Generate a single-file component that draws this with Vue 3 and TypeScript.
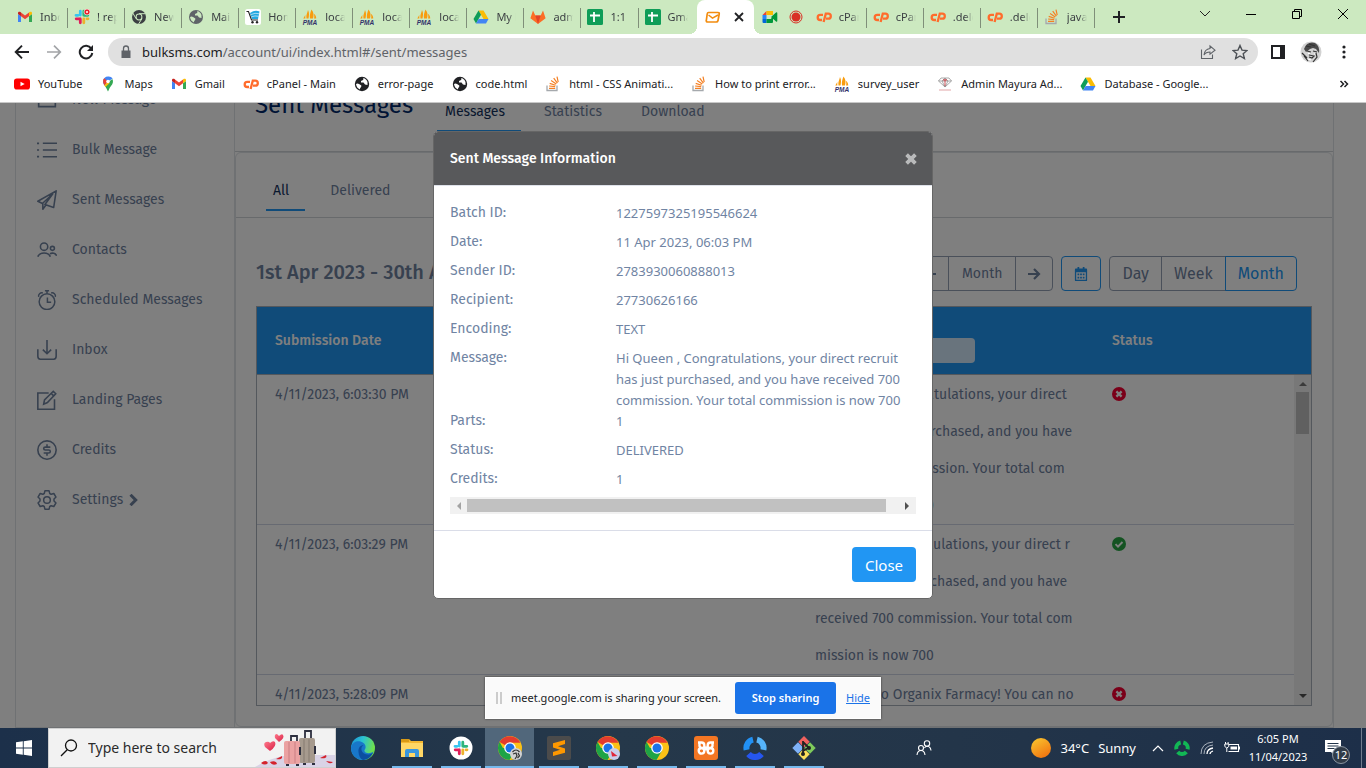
<script setup lang="ts">
import { ref } from 'vue'

interface Tab { icon: string; label: string }

const tabs: Tab[] = [
  { icon: 'gmail', label: 'Inbox' },
  { icon: 'slack-alert', label: '! reports' },
  { icon: 'chrome-dark', label: 'New Tab' },
  { icon: 'globe-gray', label: 'Mail' },
  { icon: 'cart', label: 'Home' },
  { icon: 'pma', label: 'localhost' },
  { icon: 'pma', label: 'localhost' },
  { icon: 'pma', label: 'localhost' },
  { icon: 'drive', label: 'My Drive' },
  { icon: 'gitlab', label: 'admin' },
  { icon: 'sheets', label: '1:1' },
  { icon: 'sheets', label: 'Gmail' },
  { icon: 'mail', label: '' },
  { icon: 'meet', label: '' },
  { icon: 'cpanel', label: 'cPanel' },
  { icon: 'cpanel', label: 'cPanel' },
  { icon: 'cpanel', label: '.delete' },
  { icon: 'cpanel', label: '.delete' },
  { icon: 'stack', label: 'javascript' },
]

const bookmarks: Tab[] = [
  { icon: 'youtube', label: 'YouTube' },
  { icon: 'maps', label: 'Maps' },
  { icon: 'gmail', label: 'Gmail' },
  { icon: 'cpanel', label: 'cPanel - Main' },
  { icon: 'globe', label: 'error-page' },
  { icon: 'globe', label: 'code.html' },
  { icon: 'stack', label: 'html - CSS Animati...' },
  { icon: 'stack', label: 'How to print error...' },
  { icon: 'pma', label: 'survey_user' },
  { icon: 'gem', label: 'Admin Mayura Ad...' },
  { icon: 'drive', label: 'Database - Google...' },
]

const menu: Tab[] = [
  { icon: 'compose', label: 'New Message' },
  { icon: 'list', label: 'Bulk Message' },
  { icon: 'plane', label: 'Sent Messages' },
  { icon: 'people', label: 'Contacts' },
  { icon: 'clock', label: 'Scheduled Messages' },
  { icon: 'inbox', label: 'Inbox' },
  { icon: 'edit', label: 'Landing Pages' },
  { icon: 'coin', label: 'Credits' },
  { icon: 'gear', label: 'Settings' },
]

const rows = [
  {
    date: '4/11/2023, 6:03:30 PM',
    ok: false,
    lines: ['Hi Lindani , Congratulations, your direct', 'recruit has just purchased, and you have', 'received 70 commission. Your total com', 'mission is now 700'],
  },
  {
    date: '4/11/2023, 6:03:29 PM',
    ok: true,
    lines: ['Hi Queen , Congratulations, your direct r', 'ecruit has just purchased, and you have', 'received 700 commission. Your total com', 'mission is now 700'],
  },
  {
    date: '4/11/2023, 5:28:09 PM',
    ok: false,
    lines: ['Welcome to Organix Farmacy! You can no'],
  },
]

const details = [
  { name: 'Batch ID:', value: '1227597325195546624' },
  { name: 'Date:', value: '11 Apr 2023, 06:03 PM' },
  { name: 'Sender ID:', value: '2783930060888013' },
  { name: 'Recipient:', value: '27730626166' },
  { name: 'Encoding:', value: 'TEXT' },
  { name: 'Message:', value: 'Hi Queen , Congratulations, your direct recruit\nhas just purchased, and you have received 700\ncommission. Your total commission is now 700' },
  { name: 'Parts:', value: '1' },
  { name: 'Status:', value: 'DELIVERED' },
  { name: 'Credits:', value: '1' },
]

const apps = [
  { icon: 'edge', name: 'Edge', open: false },
  { icon: 'folder', name: 'File Explorer', open: true },
  { icon: 'slack-round', name: 'Slack', open: true },
  { icon: 'chrome-photo', name: 'Chrome', open: true, active: true },
  { icon: 'sublime', name: 'Sublime Text', open: true },
  { icon: 'chrome-badge', name: 'Chrome', open: true },
  { icon: 'chrome', name: 'Chrome', open: true },
  { icon: 'xampp', name: 'XAMPP', open: true },
  { icon: 'ring-blue', name: 'Tracker', open: true },
  { icon: 'git', name: 'Git', open: true },
]

const open = ref(true)
const sharing = ref(true)
const filter = ref('')
</script>

<template>
  <svg class="defs" aria-hidden="true">
    <defs>
      <linearGradient id="g-edge" x1="0" y1="0" x2="1" y2="0.3">
        <stop offset="0" stop-color="#1b8fd8" /><stop offset="0.5" stop-color="#2bc3d2" /><stop offset="1" stop-color="#6fe04c" />
      </linearGradient>
      <linearGradient id="g-sun" x1="0.2" y1="0" x2="0.8" y2="1">
        <stop offset="0" stop-color="#f9c32e" /><stop offset="1" stop-color="#f0700f" />
      </linearGradient>
      <linearGradient id="g-heart" x1="0" y1="0" x2="1" y2="1">
        <stop offset="0" stop-color="#ff7a8c" /><stop offset="1" stop-color="#d81f45" />
      </linearGradient>
      <symbol id="gmail" viewBox="0 0 16 16">
        <path d="M1 13V5l3 2.2V13z" fill="#4285f4" /><path d="M12 13V7.2L15 5v8z" fill="#34a853" />
        <path d="M1 5V4c0-1.4 1.6-1.7 2.5-1L4 3.400V7.2z" fill="#c5221f" />
        <path d="M4 3.400 8 6.400l4-3V7.200l-4 3-4-3z" fill="#ea4335" />
        <path d="M12 3.400l.5-.4c.9-.7 2.500-.4 2.500 1v1l-3 2.200z" fill="#fbbc04" />
      </symbol>
      <symbol id="slack" viewBox="0 0 16 16">
        <g fill="none" stroke-width="2.800" stroke-linecap="round">
          <path d="M6.300 2.200V6M2 6.300h2" stroke="#36c5f0" /><path d="M13.800 6.300H10M9.800 2.200v4" stroke="#2eb67d" />
          <path d="M9.800 13.800V10M14 9.800h-1" stroke="#ecb22e" /><path d="M2.200 9.800H6M6.300 10v3.800" stroke="#e01e5a" />
        </g>
      </symbol>
      <symbol id="slack-alert" viewBox="0 0 16 16">
        <use href="#slack" width="16" height="16" />
        <circle cx="13" cy="3" r="3" fill="#e8212c" stroke="#fff" stroke-width=".6" /><circle cx="13" cy="3" r="1" fill="#fff" />
      </symbol>
      <symbol id="slack-round" viewBox="0 0 24 24">
        <circle cx="12" cy="12" r="11.500" fill="#fff" /><use href="#slack" x="4" y="4" width="16" height="16" />
      </symbol>
      <symbol id="chrome-dark" viewBox="0 0 16 16">
        <circle cx="8" cy="8" r="7" fill="#3c4043" /><path d="M8 4.700h6.500M5.100 9.700 1.800 4M10.900 9.700 7.600 15" stroke="#cce9c0" stroke-width="1" />
        <circle cx="8" cy="8" r="3.400" fill="#cce9c0" /><circle cx="8" cy="8" r="2.400" fill="#3c4043" />
      </symbol>
      <symbol id="globe-gray" viewBox="0 0 16 16">
        <circle cx="8" cy="8" r="7" fill="#5f6368" />
        <path d="M2 8q1.500-.8 3 0l2 1.200q1 .8 0 1.800l-1 1.500v1Q2.500 12 2 8zM9 2q1 1 0 2L7 5v1.500h2.500l1.500 2 2.500.5q.8-3-1-5T9 2z" fill="#cce9c0" />
      </symbol>
      <symbol id="globe" viewBox="0 0 16 16">
        <circle cx="8" cy="8" r="7.200" fill="#202124" />
        <path d="M2 8q1.500-.8 3 0l2 1.200q1 .8 0 1.800l-1 1.500v1Q2.500 12 2 8zM9 2q1 1 0 2L7 5v1.500h2.500l1.500 2 2.500.5q.8-3-1-5T9 2z" fill="#fff" />
      </symbol>
      <symbol id="cart" viewBox="0 0 16 16">
        <rect width="16" height="16" rx="2.500" fill="#fff" /><path d="M5 4q5-3.500 9.500-1.500L13 10H7z" fill="#25a8e0" />
        <path d="M6 5.500q4-2 8-.8M6.500 7.800q3.500-1.500 7-.5" fill="none" stroke="#fff" stroke-width=".6" />
        <path d="M1.500 2.500h2l3 8.500h6.500" fill="none" stroke="#222" stroke-width="1.100" /><circle cx="7.500" cy="13.300" r="1.200" fill="#222" /><circle cx="12" cy="13.300" r="1.200" fill="#222" />
      </symbol>
      <symbol id="pma" viewBox="0 0 16 16">
        <path d="M4.500 9.500C3.800 6 5.500 3.500 6 1c1.600 3 1 6 .5 8.500zM8 9.500C7.400 6 8.500 3 9.500.5c2.500 3 2.300 6 1.500 9zM12 9.500c.6-2 .2-3.500-.2-4.800 1.900 1.300 2.500 3 2.400 4.800zM1.300 9.500l2-3.500v3.500z" fill="#f89c0e" />
        <text x="8" y="15.500" text-anchor="middle" font-family="Liberation Sans" font-size="6.500" font-weight="700" font-style="italic" fill="#33336b">PMA</text>
      </symbol>
      <symbol id="drive" viewBox="0 0 16 16">
        <path d="M5.500 1.500h5L15.500 10h-5z" fill="#fbbc04" /><path d="M5.500 1.500 8 5.800 3 14.500.5 10z" fill="#0f9d58" /><path d="M5.600 10h9.900L13 14.500H3z" fill="#4285f4" />
      </symbol>
      <symbol id="gitlab" viewBox="0 0 16 16">
        <path d="M8 15 .4 9.200 3 1.500l2.300 5h5.400l2.300-5 2.600 7.700z" fill="#fc6d26" /><path d="M8 15 5.300 6.500h5.400z" fill="#e24329" />
      </symbol>
      <symbol id="sheets" viewBox="0 0 16 16">
        <rect width="16" height="16" rx="1.500" fill="#0f9d58" /><path d="M3 6.500h10M7 3v10" stroke="#fff" stroke-width="1.800" />
      </symbol>
      <symbol id="mail" viewBox="0 0 16 16">
        <path d="M3.500 3.500H13q1.500 0 1.200 1.500L13 11.500q-.3 1.500-1.700 1.500H2.700Q1 13 1.300 11.500L2.200 5q.2-1.500 1.300-1.500z" fill="none" stroke="#f28c0f" stroke-width="1.700" /><path d="m3.500 6 4 3.200L13 6" fill="none" stroke="#f28c0f" stroke-width="1.500" />
      </symbol>
      <symbol id="meet" viewBox="0 0 16 16">
        <path d="M.5 6 4.500 2v4z" fill="#ea4335" /><path d="M4.500 2H11v4H4.500z" fill="#fbbc04" /><path d="M.5 6h4v4h-4z" fill="#2684fc" /><path d="M.5 10h4v4h-3q-1 0-1-1z" fill="#0066da" />
        <path d="M4.500 10H9l2-4v7q0 1-1 1H4.500zM9 8l5-4.500q1.300-.8 1.300.8v7.400q0 1.600-1.300.8z" fill="#00983a" />
      </symbol>
      <symbol id="cpanel" viewBox="0 0 16 16">
        <g fill="none" stroke="#ff6c2c" stroke-width="2.300"><path d="M7 5.800H4.300a2.600 2.600 0 0 0 0 5.200H6" /><path d="M7.600 13 9.800 4.700h2.500a2.500 2.500 0 0 1 0 5H10" /></g>
      </symbol>
      <symbol id="stack" viewBox="0 0 16 16">
        <path d="M2 9.500v5h10v-5" fill="none" stroke="#a5a9ad" stroke-width="1.300" />
        <path d="M4 12.400h6.200M4.100 10l6.100.7M4.700 7.400l5.900 1.800M6.100 4.600l5.200 3.300M8.700 2.200l3.700 4.900M12 .7l1.200 5.500" stroke="#f48024" stroke-width="1.200" />
      </symbol>
      <symbol id="youtube" viewBox="0 0 16 16"><rect y="2.500" width="16" height="11" rx="2.800" fill="#f00" /><path d="m6.500 5.700 4.200 2.300-4.200 2.300z" fill="#fff" /></symbol>
      <symbol id="maps" viewBox="0 0 16 16">
        <path d="M8 .5a5 5 0 0 0-5 5c0 1.500.7 2.700 1.500 3.900L8 5.500l4.700-3A5 5 0 0 0 8 .5z" fill="#4285f4" /><path d="M4.200 2.300 8 5.500 4.500 9.400C3.200 7.500 2.300 4.500 4.200 2.300z" fill="#ea4335" />
        <path d="M4.500 9.400 12.300 3c1.500 2.500.4 5-1.300 7-1.400 1.600-1.800 3.400-3 5.500-1-2-1.500-3.500-3.500-6.100z" fill="#34a853" /><path d="M4.500 9.400 8 5.500l1.700 1.400-4.200 4z" fill="#fbbc04" /><circle cx="8" cy="5.500" r="1.800" fill="#fff" />
      </symbol>
      <symbol id="gem" viewBox="0 0 16 16">
        <path d="M4 2h8l2.500 3L8 11 1.500 5zM1.500 5h13M5 5l3 6 3-6-3-3z" fill="none" stroke="#888" stroke-width=".7" /><path d="M6 4h4M8 3v7" stroke="#c2262e" stroke-width=".8" /><path d="M2 14h12" stroke="#d98f93" stroke-width=".8" />
      </symbol>
      <symbol id="compose" viewBox="0 0 24 24"><path d="M2 4h20v16H2z" fill="none" stroke="currentColor" stroke-width="2" /></symbol>
      <symbol id="list" viewBox="0 0 24 24"><path d="M7 4h17M7 12h17M7 20h17" stroke="currentColor" stroke-width="1.800" /><path d="M0 4h2.500M0 12h2.500M0 20h2.500" stroke="currentColor" stroke-width="2" /></symbol>
      <symbol id="plane" viewBox="0 0 24 24"><path d="M23 1 1 13.500l5.500 2.700L19 4.500 9.500 17.500 20 21zM7 16.500V23l3.500-4.800" fill="none" stroke="currentColor" stroke-width="1.900" stroke-linejoin="round" /></symbol>
      <symbol id="people" viewBox="0 0 24 24"><g fill="none" stroke="currentColor" stroke-width="1.900"><circle cx="8.500" cy="8" r="4.400" /><circle cx="18.500" cy="10" r="2.400" /><path d="M1 20c1.500-3.800 4.500-4.500 7.500-4.500s6 .7 7.500 4.500M15.500 16.500c3-1.500 6.800-.7 8 2.500" /></g></symbol>
      <symbol id="clock" viewBox="0 0 24 24"><g fill="none" stroke="currentColor" stroke-width="1.800"><circle cx="12" cy="14" r="9.400" /><path d="M9.500 1h5M12 1v3M12.500 9v5.700h4.500M2 8.200c-.8-3 2-5.500 5-4.700M22 8.200c.8-3-2-5.500-5-4.700" /></g></symbol>
      <symbol id="inbox" viewBox="0 0 24 24"><path d="M1 11v8.500Q1 23 4 23h16q3 0 3-3.500V11M12 0v16M7 11.500l5 5 5-5" fill="none" stroke="currentColor" stroke-width="1.900" /></symbol>
      <symbol id="edit" viewBox="0 0 24 24"><path d="M14 3.500H1V23h20V11M8 17l1-5L19.500 1.500l3 3L12.500 15zM17 4l3 3" fill="none" stroke="currentColor" stroke-width="1.900" /></symbol>
      <symbol id="coin" viewBox="0 0 24 24"><g fill="none" stroke="currentColor" stroke-width="1.900"><circle cx="12" cy="12" r="11" /><path d="M16 8.500H10q-2 0-2 1.700T10 12h4q2 0 2 1.800t-2 1.800H8M12 5v3.500M12 15.500V19" /></g></symbol>
      <symbol id="gear" viewBox="0 0 24 24"><g fill="none" stroke="currentColor" stroke-width="1.800" stroke-linejoin="round"><circle cx="12" cy="12" r="4" /><path d="M9.500 1h5l.8 3.200 1.700 1 3.200-1 2.600 4.300-2.400 2.300v2.400l2.400 2.300-2.600 4.300-3.200-1-1.700 1-.8 3.200h-5l-.8-3.200-1.700-1-3.200 1-2.600-4.300 2.400-2.300v-2.400L1.200 8.500l2.600-4.300 3.200 1 1.700-1z" /></g></symbol>
      <symbol id="bad" viewBox="0 0 14 14"><circle cx="7" cy="7" r="7" fill="#f50032" /><path d="m4.400 4.400 5.200 5.200M9.600 4.400 4.400 9.600" stroke="#fff" stroke-width="2.300" /></symbol>
      <symbol id="good" viewBox="0 0 14 14"><circle cx="7" cy="7" r="7" fill="#28a745" /><path d="m3.500 7.200 2.500 2.500 4.500-4.700" fill="none" stroke="#fff" stroke-width="1.900" /></symbol>
      <symbol id="edge" viewBox="0 0 24 24">
        <circle cx="12" cy="12" r="12" fill="url(#g-edge)" /><path d="M.1 11C1.500 6 6 4.500 9.500 5.500c4 1 5.500 4 5 6.500-.3 1.500-1.500 2-1 3.300 1 2.500 6 2.500 9 .3C20.500 21 16.500 24 12 24 5 24-.5 18 .1 11z" fill="#1877c9" />
        <path d="M7.500 16c-.5-4.500 2-7 5-6.800-2.800 1.300-3 5.800.5 8.300 3 2 7 1 9-.8-2 4.500-6 7-10 7.200-2.800-1-4.200-4-4.500-7.900z" fill="#0c4fa0" />
      </symbol>
      <symbol id="folder" viewBox="0 0 24 24"><path d="M1 3h8l2 2h12v16H1z" fill="#f5b731" /><path d="M1 7h22v14H1z" fill="#ffd766" /><path d="M1 3h8v3H1z" fill="#d99a16" /><path d="M5 21v-6q0-2 2-2h10q2 0 2 2v6h-4v-4H9v4z" fill="#3a96dd" /></symbol>
      <symbol id="chrome" viewBox="0 0 24 24">
        <circle cx="12" cy="12" r="12" fill="#fbc116" /><path d="M12 12 1.600 6A12 12 0 0 1 22.400 6.600L22.400 6.800H12z" fill="#e33b2e" /><path d="M1.600 6A12 12 0 0 0 11.500 24l5.500-9.500L12 12H5z" fill="#1ea446" />
        <circle cx="12" cy="12" r="5.800" fill="#fff" /><circle cx="12" cy="12" r="4.500" fill="#1a73e8" />
      </symbol>
      <symbol id="chrome-photo" viewBox="0 0 24 24"><use href="#chrome" width="24" height="24" /><circle cx="18" cy="18" r="6" fill="#d2d2d2" /><path d="M14.500 16q3.500-4 7 0M15 18l3-1 1 3-2 3M20 17l1.500 3-2 2" fill="none" stroke="#333" stroke-width="1.200" /></symbol>
      <symbol id="chrome-badge" viewBox="0 0 24 24"><use href="#chrome" width="24" height="24" /><circle cx="18" cy="18" r="6" fill="#c9cfea" /><path d="m15 15 6.500 5-5.500.5z" fill="#e0283a" /></symbol>
      <symbol id="sublime" viewBox="0 0 24 24"><rect width="24" height="24" rx="2" fill="#4b4b4b" /><path d="M18 4v4l-7 2.200 7 2.200v4.400L6 20v-4l7-2.300-7-2.100V7.300z" fill="#ff9800" /></symbol>
      <symbol id="xampp" viewBox="0 0 24 24"><rect width="24" height="24" rx="3" fill="#f37623" /><g fill="none" stroke="#fff" stroke-width="2.400"><path d="M4 6.500h3.500a2.800 2.800 0 0 1 2.800 2.800V12M20 6.500h-3.500a2.800 2.800 0 0 0-2.800 2.800V12M6 12h12M5.500 6.500V10l1 2M18.500 6.500V10l-1 2" /><circle cx="7.500" cy="14.800" r="2.800" /><circle cx="16.500" cy="14.800" r="2.800" /></g><path d="M9.300 10.500h5.400v4H9.300z" fill="#fff" /></symbol>
      <symbol id="ring-blue" viewBox="0 0 24 24"><g fill="none" stroke-width="6"><path d="M10 3.700A8.500 8.500 0 0 0 3.600 13.800" stroke="#2191f5" /><path d="M14 3.700A8.500 8.500 0 0 1 20.400 13.800" stroke="#56b4fa" /><path d="M5.500 18A8.500 8.500 0 0 0 18.500 18" stroke="#2556f0" /></g></symbol>
      <symbol id="git" viewBox="0 0 24 24">
        <path d="m12 0 5.700 5.700-5.700 5.700-5.700-5.700z" fill="#f0615e" /><path d="m6 6.300 5.700 5.700L6 17.700.3 12z" fill="#7fb2f8" /><path d="m18 6.300 5.700 5.700-5.700 5.700-5.700-5.700z" fill="#7ecb5c" /><path d="m12 12.600 5.700 5.700L12 24l-5.700-5.700z" fill="#fbdf5a" />
        <path d="M11 5v13M11 6l6 6M11 15l5-3" stroke="#222" stroke-width="1.800" /><circle cx="11" cy="18" r="2" fill="#222" /><circle cx="17" cy="12" r="2" fill="#222" />
      </symbol>
      <symbol id="ring-green" viewBox="0 0 24 24"><g fill="none" stroke="#12b755" stroke-width="6"><path d="M10 3.700A8.500 8.500 0 0 0 3.600 13.800M14 3.700A8.500 8.500 0 0 1 20.400 13.800M5.500 18A8.500 8.500 0 0 0 18.500 18" /></g></symbol>
    </defs>
  </svg>

  <div class="screen">
    <header class="browser">
      <div class="tabstrip">
        <div class="tabs">
          <a v-for="(t, i) in tabs" :key="i" href="#" class="tab" :class="{ active: t.icon === 'mail', before: i === 11 || t.icon === 'meet' || t.icon === 'mail' }">
            <svg class="i16"><use :href="'#' + t.icon" /></svg>
            <span v-if="t.label" class="tab-label">{{ t.label }}</span>
            <svg v-else-if="t.icon === 'mail'" class="i14" viewBox="0 0 14 14"><path d="m3 3 8 8M11 3l-8 8" stroke="#202124" stroke-width="1.800" /></svg>
            <svg v-else class="i14" viewBox="0 0 14 14"><circle cx="7" cy="7" r="6" fill="none" stroke="#d93025" /><circle cx="7" cy="7" r="4.500" fill="#d93025" /></svg>
          </a>
        </div>
        <div class="window-controls">
          <button aria-label="New tab"><svg class="i14" viewBox="0 0 14 14"><path d="M7 1v12M1 7h12" stroke="#202124" stroke-width="2" /></svg></button>
          <span class="grow"></span>
          <button aria-label="Search tabs" class="wide"><svg class="i12" viewBox="0 0 12 12"><path d="m1 3 5 5 5-5" fill="none" stroke="#222" /></svg></button>
          <button aria-label="Minimize" class="wide"><svg class="i12" viewBox="0 0 12 12"><path d="M1 6.500h10" stroke="#000" /></svg></button>
          <button aria-label="Restore" class="wide"><svg class="i12" viewBox="0 0 12 12"><path d="M1.500 3.500h7v7h-7zM3.500 3.500v-2h7v7h-2" fill="none" stroke="#000" /></svg></button>
          <button aria-label="Close window" class="wide"><svg class="i12" viewBox="0 0 12 12"><path d="m1 1 10 10M11 1 1 11" stroke="#000" /></svg></button>
        </div>
      </div>

      <div class="toolbar">
        <button aria-label="Back"><svg class="i16" viewBox="0 0 16 16"><path d="M15 8H2M8 1.700 1.700 8 8 14.300" fill="none" stroke="#202124" stroke-width="1.900" /></svg></button>
        <button aria-label="Forward"><svg class="i16" viewBox="0 0 16 16"><path d="M1 8h13M8 1.700 14.300 8 8 14.300" fill="none" stroke="#a2a4a7" stroke-width="1.700" /></svg></button>
        <button aria-label="Reload"><svg class="i16" viewBox="0 0 16 16"><path d="M13.300 4.600A6.300 6.300 0 1 0 14.300 9" fill="none" stroke="#202124" stroke-width="2" /><path d="M15 1v6H9z" fill="#202124" /></svg></button>
        <div class="omnibox">
          <svg class="i14" viewBox="0 0 14 14"><path d="M2.500 5.500h9V13h-9z" fill="#5f6368" /><path d="M4.500 6V3.500a2.500 2.500 0 0 1 5 0V6" fill="none" stroke="#5f6368" stroke-width="1.300" /></svg>
          <span class="url">bulksms.com<i>/account/ui/index.html#/sent/messages</i></span>
          <button aria-label="Share"><svg class="i16" viewBox="0 0 16 16"><path d="M1.500 5.500v9h11v-4M10 2l5 4.200-5 4V8c-3 0-4.800 1-6 3 .3-3.500 2.500-6 6-6.500z" fill="none" stroke="#5f6368" stroke-width="1.100" /></svg></button>
          <button aria-label="Bookmark"><svg class="i16" viewBox="0 0 16 16"><path d="m8 1.500 2 4.600 5 .4-3.800 3.200 1.200 4.800L8 12l-4.400 2.500 1.200-4.800L1 6.500l5-.4z" fill="none" stroke="#4d5156" stroke-width="1.400" /></svg></button>
        </div>
        <div class="tools">
          <button aria-label="Side panel"><svg class="i16" viewBox="0 0 16 16"><path d="M1 1h14v14H1zM3 3v10h7V3z" fill="#202124" fill-rule="evenodd" /></svg></button>
          <button aria-label="Profile">
            <svg class="i22" viewBox="0 0 22 22"><circle cx="11" cy="11" r="10.500" fill="#d2d2d2" /><path d="M4 8Q7 0 15 2q5 3 4 10l-3-4-3-1-3 1-4 3z" fill="#4a4a4a" /><path d="m2 12 5 5M6 5l5 1M7 10l4 1M13 10l4 1M9 14l5 1-2 2-3-1M16 12l1 4-4 5M4 15l4 5M9 3l6 2" fill="none" stroke="#333" stroke-width="1.200" /><path d="M8 12.500h2M14 13h1M8 18l3 1" stroke="#fff" stroke-width="1.200" /></svg>
          </button>
          <button aria-label="Menu"><svg class="i16" viewBox="0 0 16 16"><circle cx="8" cy="3" r="1.600" fill="#202124" /><circle cx="8" cy="8" r="1.600" fill="#202124" /><circle cx="8" cy="13" r="1.600" fill="#202124" /></svg></button>
        </div>
      </div>

      <nav class="bookmarks">
        <a v-for="b in bookmarks" :key="b.label" href="#"><svg class="i16"><use :href="'#' + b.icon" /></svg>{{ b.label }}</a>
        <button aria-label="More bookmarks"><svg class="i12" viewBox="0 0 12 12"><path d="m2.500 3 3 3-3 3M6.500 3l3 3-3 3" fill="none" stroke="#202124" stroke-width="1.500" /></svg></button>
      </nav>
    </header>

    <div class="viewport">
      <div class="page">
        <nav class="sidebar">
          <a v-for="m in menu" :key="m.label" href="#">
            <svg class="i20"><use :href="'#' + m.icon" /></svg>{{ m.label }}
            <svg v-if="m.icon === 'gear'" class="i12 caret" viewBox="0 0 12 12"><path d="m2.500.8 5.200 5.200-5.200 5.200" fill="none" stroke="currentColor" stroke-width="3" /></svg>
          </a>
        </nav>
        <main class="main">
          <div class="page-head">
            <h1>Sent Messages</h1>
            <nav class="head-tabs"><a href="#" class="current">Messages</a><a href="#">Statistics</a><a href="#">Download</a></nav>
          </div>
          <section class="card">
            <nav class="filter-tabs"><a href="#" class="current">All</a><a href="#">Delivered</a></nav>
            <div class="range">
              <h2>1st Apr 2023 - 30th Apr 2023</h2>
              <div class="group small">
                <button aria-label="Previous month"><svg class="i14" viewBox="0 0 14 14"><path d="M13 7H2.500M7 2 2 7l5 5" fill="none" stroke="currentColor" stroke-width="2.200" /></svg></button>
                <button class="period">Month</button>
                <button aria-label="Next month"><svg class="i14" viewBox="0 0 14 14"><path d="M1 7h10.500M7 2l5 5-5 5" fill="none" stroke="currentColor" stroke-width="2.200" /></svg></button>
              </div>
              <div class="group">
                <button class="on" aria-label="Pick date"><svg class="i14" viewBox="0 0 14 16"><path d="M0 3q0-1.200 1-1.200h2V0h2v1.800h4V0h2v1.800h2q1 0 1 1.200v12q0 1-1 1H1q-1 0-1-1zM1.500 6v8.500h11V6z" fill="currentColor" fill-rule="evenodd" /><path d="M3 8.500h8M3 12h8" stroke="currentColor" stroke-width="2" stroke-dasharray="2 1" /></svg></button>
              </div>
              <div class="group"><button>Day</button><button>Week</button><button class="on">Month</button></div>
            </div>
            <div class="grid-box">
              <table>
                <thead>
                  <tr>
                    <th class="c-date">Submission Date</th><th class="c-to"></th>
                    <th class="c-msg"><label for="message-filter">Message</label><input id="message-filter" v-model="filter" type="text" /></th>
                    <th>Status</th>
                  </tr>
                </thead>
                <tbody>
                  <tr v-for="r in rows" :key="r.date">
                    <td>{{ r.date }}</td><td></td>
                    <td><span v-for="l in r.lines" :key="l" class="line">{{ l }}</span></td>
                    <td><svg class="i14 state" role="img" :aria-label="r.ok ? 'Delivered' : 'Failed'"><use :href="r.ok ? '#good' : '#bad'" /></svg></td>
                  </tr>
                </tbody>
              </table>
              <div class="vbar">
                <svg class="i12" viewBox="0 0 12 12"><path d="M2 8h8L6 4z" fill="#777" /></svg>
                <div class="thumb"></div>
                <svg class="i12" viewBox="0 0 12 12"><path d="M2 4h8L6 8z" fill="#505050" /></svg>
              </div>
            </div>
          </section>
        </main>
      </div>

      <div v-if="open" class="backdrop">
        <section class="modal" role="dialog" aria-labelledby="modal-title">
          <header>
            <h3 id="modal-title">Sent Message Information</h3>
            <button aria-label="Close dialog" @click="open = false"><svg class="i12" viewBox="0 0 12 12"><path d="m1.600 1.600 8.800 8.800M10.400 1.600l-8.800 8.800" stroke="#b9babb" stroke-width="3.800" /></svg></button>
          </header>
          <div class="modal-body">
            <dl>
              <div v-for="d in details" :key="d.name" :class="{ multi: d.name === 'Message:' }"><dt>{{ d.name }}</dt><dd>{{ d.value }}</dd></div>
            </dl>
            <div class="hbar">
              <svg class="i12" viewBox="0 0 12 12"><path d="M8 2v8L4 6z" fill="#a3a3a3" /></svg>
              <div class="track"><div class="thumb"></div></div>
              <svg class="i12" viewBox="0 0 12 12"><path d="M4 2v8l4-4z" fill="#505050" /></svg>
            </div>
          </div>
          <footer><button @click="open = false">Close</button></footer>
        </section>
      </div>
      <div v-if="sharing" class="share">
        <span class="grip"></span><span>meet.google.com is sharing your screen.</span>
        <button @click="sharing = false">Stop sharing</button><a href="#" @click.prevent="sharing = false">Hide</a>
      </div>
    </div>

    <footer class="taskbar">
      <button class="start" aria-label="Start"><svg class="i16" viewBox="0 0 16 16"><path d="M0 2.300 6.800 1.300V7.600H0zM7.700 1.200 16 0v7.600H7.700zM0 8.500h6.800v6.300L0 13.800zM7.700 8.500H16V16l-8.300-1.200z" fill="#fff" /></svg></button>
      <label class="search">
        <svg class="i18" viewBox="0 0 18 18"><circle cx="11" cy="6.500" r="5.500" fill="none" stroke="#111" stroke-width="1.300" /><path d="M7.200 10.700 1 17" stroke="#111" stroke-width="1.300" /></svg>
        <input type="text" placeholder="Type here to search" />
        <svg class="luggage" viewBox="0 0 80 38">
          <path d="M0 38q20-12 40-12t40 0v12z" fill="#d9d3e6" />
          <path d="m15 22-5-4q-2-4 1-5t4 1q3-3 5-1 2 4-5 9z" fill="url(#g-heart)" /><path d="m24 13-4-4q-1-4 2-4l2 2q3-3 4-1 2 3-4 7z" fill="url(#g-heart)" />
          <path d="M36 12V7h6v5M50 9V2h6v7" fill="none" stroke="#2d2f3f" stroke-width="1.800" />
          <rect x="44" y="9" width="16" height="25" rx="2" fill="#a69a8e" /><path d="M49 10v23M54 10v23" stroke="#857a70" /><rect x="29" y="12" width="16" height="23" rx="2" fill="#eba2a2" /><path d="M34 13v21M40 13v21" stroke="#ca7f83" />
          <path d="M45 18v8M60 17v8M31 36h3M41 36h3M48 35h3M57 35h3" stroke="#2d2f3f" stroke-width="2" />
          <path d="M6 34q5-4 7 0-3 3-7 0zM15 33q6-2 7 2-5 2-7-2zM21 30l6-3q1 4-6 3zM65 29l6-3q2 4-6 3zM71 32l7 1q-3 3-7-1z" fill="#d4232d" />
        </svg>
      </label>
      <nav class="apps">
        <button v-for="(a, i) in apps" :key="i" :aria-label="a.name" :class="{ open: a.open, active: a.active }"><svg class="i24"><use :href="'#' + a.icon" /></svg></button>
      </nav>
      <button class="meet-now" aria-label="People"><svg class="i16" viewBox="0 0 16 16"><g fill="none" stroke="#fff" stroke-width="1.100"><circle cx="5" cy="8" r="2.500" /><path d="M1 15q.5-4.500 4-4.500T9 15" /><circle cx="11" cy="3.500" r="2.700" /><path d="M8.500 8q1-1.800 2.700-1.700 3.300.2 3.800 4.200" /></g></svg></button>
      <div class="tray">
        <svg class="i20" viewBox="0 0 20 20"><circle cx="10" cy="10" r="10" fill="url(#g-sun)" /></svg>
        <span class="weather">34°C</span><span class="weather">Sunny</span>
        <div class="tray-icons">
          <svg class="i12" viewBox="0 0 12 12"><path d="m1 9 5-5 5 5" fill="none" stroke="#fff" stroke-width="1.200" /></svg>
          <svg class="i16"><use href="#ring-green" /></svg>
          <svg class="i14" viewBox="0 0 14 14"><g fill="none" stroke="#aab2bd" stroke-width="1"><path d="M1 13Q1 2 13 1M4 13q0-8 9-9" /><path d="M7 13q0-5 6-6M10 13q0-2 3-3" stroke="#fff" stroke-width="1.300" /></g></svg>
          <svg class="i16" viewBox="0 0 16 16"><path d="M5 4.500h9.500v7H4.500M15.500 6.500v3" fill="none" stroke="#fff" stroke-width="1.100" /><path d="M6.500 6.500H13v3H6.500z" fill="#fff" /><path d="M.8 4h4v2.500L2.800 8 .8 6.500zM2.800 8v4M1.500 2v2M4.100 2v2" fill="none" stroke="#fff" /></svg>
        </div>
        <div class="clock"><span>6:05 PM</span><span>11/04/2023</span></div>
        <div class="notice">
          <svg class="i16" viewBox="0 0 16 16"><path d="M0 0h16v12H9v3l-3-3H0z" fill="#fff" /><path d="M2.500 3.500h11M2.500 6h11M2.500 8.500h7" stroke="#22344a" /></svg>
          <b>12</b>
        </div>
      </div>
    </footer>
  </div>
</template>

<style>
body { margin: 0; }
</style>

<style scoped>
.screen, .screen * { box-sizing: border-box; }
.defs { position: absolute; width: 0; height: 0; }
.screen { display: flex; flex-direction: column; height: 100vh; overflow: hidden; font: 11px/16px "Noto Sans", sans-serif; color: #202124; background: #fff; }
a { color: inherit; text-decoration: none; }
button { border: 0; padding: 0; background: none; font: inherit; color: inherit; display: flex; align-items: center; justify-content: center; cursor: pointer; }
svg { flex: none; display: block; }
.i12 { width: 12px; height: 12px; } .i14 { width: 14px; height: 14px; } .i16 { width: 16px; height: 16px; } .i18 { width: 18px; height: 18px; }
.i20 { width: 20px; height: 20px; } .i22 { width: 22px; height: 22px; } .i24 { width: 24px; height: 24px; }
.grow { flex: 1; }

.browser { flex: none; border-bottom: 1px solid #c8c8c8; }
.tabstrip { display: flex; height: 34px; background: #cce9c0; }
.tabs { flex: 1; display: flex; padding-left: 12px; min-width: 0; }
.tab { flex: 1 1 16px; min-width: 0; display: flex; align-items: center; gap: 7px; padding-left: 5px; position: relative; color: #3c4043; }
.tab::after { content: ""; position: absolute; right: 1px; top: 8px; height: 20px; width: 1px; background: #7f8f79; }
.tab.before::after { display: none; }
.tab.active { background: #fff; border-radius: 8px 8px 0 0; padding-left: 8px; gap: 11px; }
.tab:has(+ .active)::before { content: ""; position: absolute; right: 0; bottom: 0; width: 8px; height: 8px; background: radial-gradient(circle at 0 0, transparent 8px, #fff 8px); }
.active + .tab::before { content: ""; position: absolute; left: 0; bottom: 0; width: 8px; height: 8px; background: radial-gradient(circle at 100% 0, transparent 8px, #fff 8px); }
.active + .tab { padding-left: 8px; gap: 11px; }
.tab-label { flex: 1; min-width: 0; margin-right: 9px; overflow: hidden; white-space: nowrap; mask-image: linear-gradient(90deg, #000 60%, transparent); }
.window-controls { flex: none; width: 270px; display: flex; padding-left: 16px; }
.window-controls .wide { width: 46px; height: 28px; }

.toolbar { display: flex; align-items: center; height: 36px; padding: 0 14px; gap: 16px; }
.tools { display: flex; align-items: center; gap: 14px; }
.omnibox { flex: 1; display: flex; align-items: center; height: 28px; margin: 0 -4px 0 -2px; padding: 0 10px 0 11px; gap: 16px; border-radius: 14px; background: #e0e0e0; }
.omnibox > svg { margin-right: -7px; }
.url { flex: 1; font-size: 13px; line-height: 20px; }
.url i { font-style: normal; color: #5f6368; }
.bookmarks { display: flex; align-items: center; height: 32px; padding: 0 16px 4px 14px; gap: 18px; white-space: nowrap; }
.bookmarks a { display: flex; align-items: center; gap: 8px; }
.bookmarks button { margin-left: auto; }

.viewport { flex: 1; min-height: 0; position: relative; overflow: hidden; font-family: "Fira Sans", "Noto Sans", sans-serif; font-size: 14px; line-height: 20px; color: #6f829f; }
.page { display: flex; height: calc(100% + 28px); margin: -28px 32px 0 15px; border: 1px solid #dee2e6; border-top: 0; }
.sidebar { flex: none; width: 219px; border-right: 1px solid #dee2e6; }
.sidebar a { display: flex; align-items: center; height: 50px; padding-left: 21px; gap: 15px; }
.caret { margin-left: -10px; }
.main { flex: 1; min-width: 0; display: flex; flex-direction: column; }
.page-head { display: flex; height: 77px; border-bottom: 1px solid #d0d4d8; padding-left: 20px; }
h1 { margin: 0; padding-top: 14px; width: 182px; font-size: 24px; line-height: 32px; font-weight: 400; color: #00296a; white-space: nowrap; }
.head-tabs { display: flex; gap: 15px; height: 57px; }
.head-tabs a { padding: 27px 16px 0 8px; }
.current { color: #12305c; border-bottom: 2px solid #2196f3; }
.card { flex: 1; display: flex; flex-direction: column; min-height: 0; border: 1px solid #dee2e6; border-radius: 6px; }
.filter-tabs { display: flex; gap: 18px; height: 65px; padding: 28px 30px 6px; border-bottom: 1px solid #d0d4d8; }
.filter-tabs a { padding: 0 16px 0 7px; }
.range { display: flex; align-items: center; height: 35px; margin: 38px 35px 15px 20px; gap: 8px; }
h2 { flex: 1; min-width: 0; overflow: hidden; white-space: nowrap; margin: 0; padding-bottom: 3px; font-size: 20px; line-height: 28px; font-weight: 500; }
.group { display: flex; font-size: 16px; }
.small { font-size: 14px; }
.group button { height: 35px; padding: 0 12px; border: 1px solid #95a1b5; margin-left: -1px; }
.group.small button { padding: 0 11px; }
.group.small .period { padding: 0 13px; }
.group button:first-child { border-radius: 4px 0 0 4px; margin-left: 0; } .group button:last-child { border-radius: 0 4px 4px 0; } .group button:only-child { border-radius: 4px; }
.group .on { color: #2196f3; border-color: #2196f3; }
.grid-box { flex: 1; min-height: 0; margin: 0 20px 20px; border: 1px solid #a9b0bb; position: relative; overflow: hidden; }
table { width: 100%; border-spacing: 0; table-layout: fixed; }
th { height: 68px; padding: 0 18px; text-align: left; font-weight: 500; color: #fff; background: #2196f3; border-bottom: 1px solid #a9b0bb; }
.c-date, .c-to { width: 270px; }
.c-msg { width: 297px; padding-top: 6px; vertical-align: top; }
.c-msg label { display: block; }
.c-msg input { display: block; width: 160px; height: 25px; margin-top: 5px; border: 0; border-radius: 4px; background: #d3e9fb; }
td { height: 150px; padding: 1px 18px 0; vertical-align: top; line-height: 37px; white-space: nowrap; border-bottom: 1px solid #ced4e4; }
.line { display: block; }
.state { margin-top: 11px; }
.vbar { position: absolute; top: 68px; right: 0; bottom: 0; width: 17px; background: #f1f1f1; display: flex; flex-direction: column; align-items: center; padding: 3px 0; }
.vbar .thumb { width: 13px; height: 42px; margin: 2px 0 auto; background: #c1c1c1; }

.backdrop { position: absolute; inset: 0; background: rgba(0, 0, 0, .5); display: flex; justify-content: center; align-items: flex-start; padding-top: 28px; }
.modal { width: 500px; background: #fff; border: 1px solid #666; border-radius: 5px; overflow: hidden; }
.modal header { display: flex; justify-content: space-between; align-items: center; height: 54px; padding: 0 15px 0 16px; background: #58595b; border-bottom: 1px solid #dfe2ea; }
h3 { margin: 0; font-size: 14px; line-height: 20px; font-weight: 500; color: #fff; }
.modal-body { padding: 16px; border-bottom: 1px solid #dadde8; }
dl { margin: 0; color: #7084a3; }
dl div { display: flex; padding-bottom: 8px; line-height: 21px; }
dl .multi { padding-bottom: 0; }
dt { flex: none; width: 166px; }
dd { margin: 0 0 -1px; padding-top: 1px; white-space: pre; font-family: "Noto Sans", sans-serif; font-size: 13px; }
.hbar { display: flex; align-items: center; height: 17px; padding: 0 3px; background: #f1f1f1; }
.track { flex: 1; margin: 0 2px; }
.hbar .thumb { width: 97%; height: 13px; background: #c1c1c1; }
.modal footer { display: flex; justify-content: flex-end; padding: 16px; }
.modal footer button { height: 35px; width: 64px; border-radius: 4px; background: #2196f3; color: #fff; font: 15px/20px "Noto Sans", sans-serif; }

.share { position: absolute; left: 50%; bottom: 9px; transform: translateX(-50%); display: flex; align-items: center; height: 42px; width: 396px; padding: 0 10px; background: #fafafa; color: #202124; border: 1px solid #fff; box-shadow: 0 0 2px #333; font: 11px/16px "Noto Sans", sans-serif; white-space: nowrap; }
.grip { flex: none; width: 6px; height: 12px; border: solid #ccc; border-width: 0 2px; margin-right: 9px; }
.share button { flex: none; width: 101px; height: 32px; margin: 0 10px 0 14px; background: #1a73e8; color: #fff; font-weight: 600; border-radius: 3px; }
.share a { color: #1a73e8; text-decoration: underline; }

.taskbar { flex: none; display: flex; height: 40px; color: #fff; background: linear-gradient(90deg, #1c304a, #25384a 45%, #233549 70%, #1d2f49); }
.start { width: 48px; }
.search { display: flex; align-items: center; width: 288px; padding-left: 11px; background: #f2f2f2; border: 1px solid #cfcfcf; }
.search input { flex: 1; min-width: 0; border: 0; padding: 0 0 0 10px; background: none; outline: 0; font: 14px/20px "Noto Sans", sans-serif; }
.search input::placeholder { color: #2b2b2b; opacity: 1; }
.luggage { width: 80px; height: 38px; }
.apps { display: flex; padding-left: 2px; }
.apps button { width: 49px; position: relative; }
.apps .open::after { content: ""; position: absolute; left: 5px; right: 4px; bottom: 0; height: 2px; background: #76b9ed; }
.apps .active { background: #51677b; }
.apps .active::after { left: 0; right: 0; }
.meet-now { margin-left: auto; width: 32px; }
.tray { display: flex; align-items: center; margin-left: 91px; padding-right: 4px; font-size: 13px; }
.weather { margin-left: 9px; }
.tray-icons { display: flex; align-items: center; gap: 10px; margin-left: 16px; }
.clock { width: 76px; display: flex; flex-direction: column; align-items: center; font-size: 11px; line-height: 18px; }
.notice { position: relative; width: 46px; height: 40px; padding: 12px 0 0 9px; border-right: 1px solid #6f7c8d; }
.notice b { position: absolute; left: 16px; top: 18px; width: 18px; height: 18px; border: 1px solid #8b96a2; border-radius: 50%; background: #303b48; font: 11px/16px "Noto Sans", sans-serif; text-align: center; }
</style>
